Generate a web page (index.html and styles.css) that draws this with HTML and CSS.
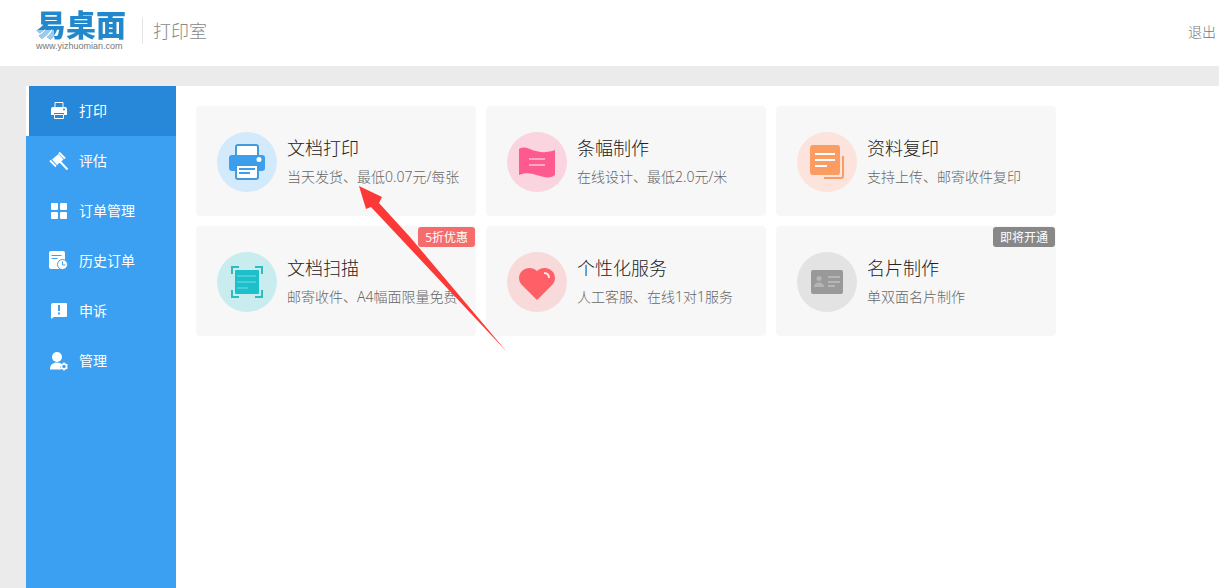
FILE: index.html
```html
<!DOCTYPE html>
<html lang="zh-CN">
<head>
  <meta charset="UTF-8">
  <title>易桌面 - 打印室</title>
  <link rel="stylesheet" href="styles.css">
</head>
<body>
  <header class="header">
    <a class="logo" href="#">
      <span class="logo-name">易桌面</span>
      <span class="logo-url">www.yizhuomian.com</span>
    </a>
    <h1 class="header-title">打印室</h1>
    <a class="logout" href="#">退出</a>
  </header>

  <div class="layout">
    <nav class="sidebar">
      <a class="nav-item active" href="#">
        <svg class="nav-icon" viewBox="0 0 20 20">
          <path d="M6 6.500v-5h8v5" fill="none" stroke="#fff"/>
          <path d="M4 6h12a2 2 0 0 1 2 2v6h-3v-2H5v2H2V8a2 2 0 0 1 2-2z" fill="#fff"/>
          <path d="M5.500 13.500h9v4h-9z" fill="#2787d8" stroke="#fff"/>
          <circle cx="15" cy="8.500" r="1" fill="#2787d8"/>
        </svg>
        <span>打印</span>
      </a>
      <a class="nav-item" href="#">
        <svg class="nav-icon" viewBox="0 0 20 20">
          <path d="M3 8.500L9.500 3l5 5.500L8 14z" fill="#fff"/>
          <path d="M1 9.500l6 6M10 1.500l6 6M11 10.500l7.500 8" fill="none" stroke="#fff" stroke-width="2"/>
        </svg>
        <span>评估</span>
      </a>
      <a class="nav-item" href="#">
        <svg class="nav-icon" viewBox="0 0 20 20" fill="#fff">
          <rect x="2" y="2" width="7" height="7" rx="1"/>
          <rect x="11" y="2" width="7" height="7" rx="1"/>
          <rect x="2" y="11" width="7" height="7" rx="1"/>
          <rect x="11" y="11" width="7" height="7" rx="1"/>
        </svg>
        <span>订单管理</span>
      </a>
      <a class="nav-item" href="#">
        <svg class="nav-icon" viewBox="0 0 20 20">
          <rect x="0" y="0" width="16" height="18" rx="2" fill="#fff"/>
          <path d="M2.500 4.500h10M2.500 7.500h6" stroke="#3ca0f2"/>
          <circle cx="13.500" cy="13.500" r="5" fill="#fff" stroke="#3ca0f2"/>
          <path d="M13.500 10.500v3.500h3" fill="none" stroke="#3ca0f2"/>
        </svg>
        <span>历史订单</span>
      </a>
      <a class="nav-item" href="#">
        <svg class="nav-icon" viewBox="0 0 20 20">
          <path d="M4 2h13a1 1 0 0 1 1 1v12a1 1 0 0 1-1 1H5l-3 2V4a2 2 0 0 1 2-2z" fill="#fff"/>
          <path d="M10 4v6M10 11.500v2" stroke="#3ca0f2" stroke-width="2"/>
        </svg>
        <span>申诉</span>
      </a>
      <a class="nav-item" href="#">
        <svg class="nav-icon" viewBox="0 0 20 20">
          <circle cx="8" cy="6" r="5" fill="#fff"/>
          <path d="M1 18.500c0-5 3-7 7-7 2.500 0 4 .8 5 2l-2 2.500 1.500 2.500z" fill="#fff"/>
          <circle cx="15" cy="15.500" r="2.500" fill="none" stroke="#fff" stroke-width="1.500"/>
          <path d="M15 11.500v1.500M15 18v1.500M11.500 13.500l1.300.8M17.200 16.700l1.300.8M18.500 13.500l-1.300.8M12.800 16.700l-1.300.8" stroke="#fff" stroke-width="1.500"/>
        </svg>
        <span>管理</span>
      </a>
    </nav>

    <main class="content">
      <a class="card" href="#">
        <svg class="card-icon" viewBox="0 0 60 60">
          <circle cx="30" cy="30" r="30" fill="#d3eafc"/>
          <path d="M19 25V15a2 2 0 0 1 2-2h18a2 2 0 0 1 2 2v10z" fill="#fff" stroke="#449bdb" stroke-width="2"/>
          <rect x="12" y="23" width="36" height="16" rx="3" fill="#3c9fee"/>
          <path d="M19 33h22v12a2 2 0 0 1-2 2H21a2 2 0 0 1-2-2z" fill="#fff" stroke="#449bdb" stroke-width="2"/>
          <circle cx="42" cy="27.500" r="2.500" fill="#fff"/>
          <path d="M22 37h16M22 41h11" stroke="#3c9fee" stroke-width="2"/>
        </svg>
        <div class="card-text">
          <h2>文档打印</h2>
          <p>当天发货、最低0.07元/每张</p>
        </div>
      </a>
      <a class="card" href="#">
        <svg class="card-icon" viewBox="0 0 60 60">
          <circle cx="30" cy="30" r="30" fill="#fad5e0"/>
          <path d="M12 17c3-2 7-2 11 0 9 4 17 4 25 1v25c-3 3-9 3-15 1-9-3-14-4-21-1z" fill="#ff5a90"/>
          <path d="M22 27h16M22 33h16" stroke="#fba9c4" stroke-width="2"/>
        </svg>
        <div class="card-text">
          <h2>条幅制作</h2>
          <p>在线设计、最低2.0元/米</p>
        </div>
      </a>
      <a class="card" href="#">
        <svg class="card-icon" viewBox="0 0 60 60">
          <circle cx="30" cy="30" r="30" fill="#fce3dc"/>
          <rect x="13" y="13" width="30" height="30" rx="3" fill="#fb9d62"/>
          <path d="M18 22h20M18 28h20M18 34h12" stroke="#fff" stroke-width="2"/>
          <path d="M46 24v20a2 2 0 0 1-2 2H27" fill="none" stroke="#fb9d62" stroke-width="2"/>
        </svg>
        <div class="card-text">
          <h2>资料复印</h2>
          <p>支持上传、邮寄收件复印</p>
        </div>
      </a>
      <a class="card" href="#">
        <svg class="card-icon" viewBox="0 0 60 60">
          <circle cx="30" cy="30" r="30" fill="#c9edef"/>
          <rect x="18" y="18" width="24" height="24" rx="1" fill="#1dbfcb"/>
          <path d="M20 24h19M20 30h19M20 36h11" stroke="#48cfd7" stroke-width="2"/>
          <path d="M15 22v-7h7M38 15h7v7M45 38v7h-7M22 45h-7v-7" fill="none" stroke="#2cbcc6" stroke-width="2"/>
        </svg>
        <div class="card-text">
          <h2>文档扫描</h2>
          <p>邮寄收件、A4幅面限量免费</p>
        </div>
        <span class="tag tag-sale">5折优惠</span>
      </a>
      <a class="card" href="#">
        <svg class="card-icon" viewBox="0 0 60 60">
          <circle cx="30" cy="30" r="30" fill="#f8dadb"/>
          <path d="M30 48L15 33c-4-4-4-10 0-14 4-4 11-4 15 0 4-4 11-4 15 0s4 10 0 14z" fill="#ff6067"/>
          <path d="M37 21c3 0 5 2 5 5" fill="none" stroke="#fde3e3" stroke-width="2"/>
        </svg>
        <div class="card-text">
          <h2>个性化服务</h2>
          <p>人工客服、在线1对1服务</p>
        </div>
      </a>
      <a class="card" href="#">
        <svg class="card-icon" viewBox="0 0 60 60">
          <circle cx="30" cy="30" r="30" fill="#e3e3e3"/>
          <rect x="14" y="18" width="32" height="24" rx="2" fill="#999"/>
          <circle cx="22" cy="26.500" r="2.500" fill="#b5b5b5"/>
          <path d="M17 35c0-6 10-6 10 0z" fill="#b5b5b5"/>
          <path d="M31 25h12M31 30h12M31 34h7" stroke="#b5b5b5" stroke-width="2"/>
        </svg>
        <div class="card-text">
          <h2>名片制作</h2>
          <p>单双面名片制作</p>
        </div>
        <span class="tag tag-soon">即将开通</span>
      </a>

      <svg class="pointer" viewBox="0 0 148 166">
        <path d="M0 0L23 11 20 17 51 51 148 166 43 54 12 21 7 23z" fill="#fb3a37"/>
      </svg>
    </main>
  </div>
</body>
</html>
```
FILE: styles.css
```css
* {
  box-sizing: border-box;
}
body {
  margin: 0;
  min-height: 100vh;
  display: flex;
  flex-direction: column;
  background-color: #ebebeb;
  font-family: "Noto Sans", "Noto Sans CJK SC", sans-serif;
  font-size: 14px;
  color: #222;
}
a {
  color: inherit;
  text-decoration: none;
}
h1, h2, p {
  margin: 0;
  font-weight: 300;
}
.header {
  display: flex;
  align-items: center;
  height: 66px;
  padding: 0 3px 4px 36px;
  background-color: white;
}
.logo {
  display: flex;
  flex-direction: column;
}
/* blue lettering with a pale lower left corner */
.logo-name {
  font-size: 30px;
  line-height: 30px;
  font-weight: 900;
  color: transparent;
  background: linear-gradient(#9ccbee, #9ccbee) 0 100% / 18px 10px no-repeat, #2288cb;
  -webkit-background-clip: text;
  background-clip: text;
}
.logo-url {
  font-family: "Liberation Sans", sans-serif;
  font-size: 9px;
  line-height: 12px;
  color: #777;
}
.header-title {
  margin-left: 16px;
  padding-left: 10px;
  border-left: 1px solid #e5e5e5;
  font-size: 18px;
  line-height: 26px;
  color: #888;
}
.logout {
  margin-left: auto;
  font-weight: 300;
  color: #777;
}
.layout {
  flex: 1;
  display: flex;
  padding: 20px 0 0 26px;
}
.sidebar {
  width: 150px;
  flex-shrink: 0;
  background-color: #3ca0f2;
}
.nav-item {
  display: flex;
  align-items: center;
  gap: 10px;
  height: 50px;
  padding-left: 20px;
  border-left: 3px solid transparent;
  color: white;
}
.nav-item span {
  padding-bottom: 2px;
}
.nav-item.active {
  background-color: #2787d8;
  border-left-color: white;
}
.nav-icon {
  width: 20px;
  height: 20px;
}
.content {
  position: relative;
  flex: 1;
  display: flex;
  flex-wrap: wrap;
  align-content: flex-start;
  gap: 10px;
  padding: 20px;
  background-color: white;
}
.card {
  position: relative;
  display: flex;
  align-items: center;
  gap: 10px;
  width: 280px;
  height: 110px;
  padding: 2px 0 0 21px;
  border-radius: 4px;
  background-color: #f7f7f7;
}
.card-icon {
  width: 60px;
  height: 60px;
  flex-shrink: 0;
}
.card-text {
  white-space: nowrap;
}
.card h2 {
  font-size: 18px;
  line-height: 30px;
}
.card p {
  font-size: 14px;
  line-height: 28px;
  color: #666;
}
.tag {
  position: absolute;
  top: 1px;
  right: 1px;
  padding: 2px 7px 0;
  border-radius: 3px;
  font-size: 12px;
  line-height: 18px;
  color: white;
}
.tag-sale {
  background-color: #f56c6c;
}
.tag-soon {
  background-color: #888;
}
/* red arrow pointing at the first card */
.pointer {
  position: absolute;
  left: 183px;
  top: 100px;
  width: 148px;
  height: 166px;
  pointer-events: none;
}
```
